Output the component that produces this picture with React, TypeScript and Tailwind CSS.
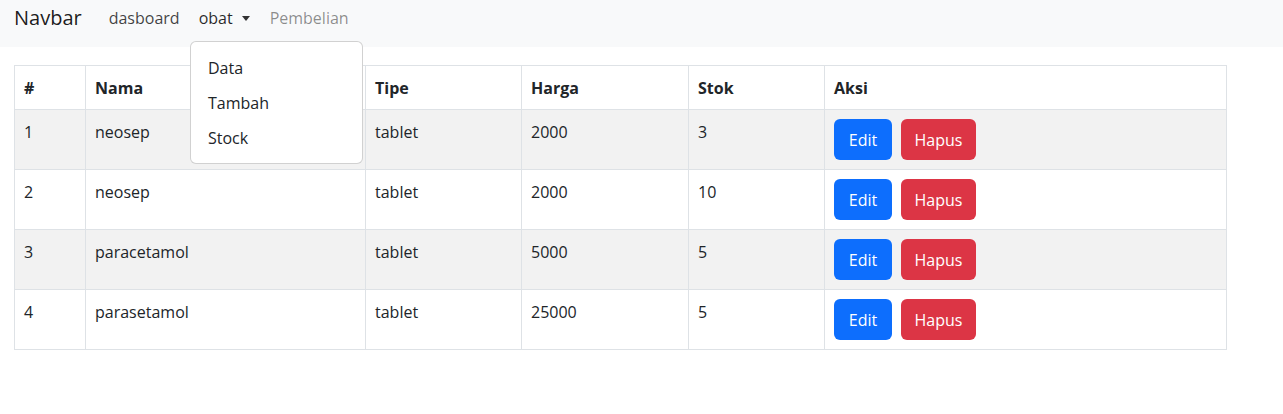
import React from "react";

const rows = [
  { no: 1, nama: "neosep", tipe: "tablet", harga: "2000", stok: "3" },
  { no: 2, nama: "neosep", tipe: "tablet", harga: "2000", stok: "10" },
  { no: 3, nama: "paracetamol", tipe: "tablet", harga: "5000", stok: "5" },
  { no: 4, nama: "parasetamol", tipe: "tablet", harga: "25000", stok: "5" },
];

export default function App() {
  return (
    <div
      className="relative w-[1283px] h-[414px] bg-white text-[#212529]"
      style={{ fontFamily: '"Open Sans", "Noto Sans", sans-serif' }}
    >
      <nav className="h-[47px] bg-[#f8f9fa] pl-[14px]">
        <div className="h-[36px] flex items-center">
          <span className="text-[20px] text-[rgba(0,0,0,0.9)] mr-[27px] leading-none">Navbar</span>
          <span className="text-[16px] text-[rgba(0,0,0,0.75)] mr-[19px]">dasboard</span>
          <span className="text-[16px] text-[rgba(0,0,0,0.85)] flex items-center mr-[20px]">
            obat
            <span className="ml-[9px] w-0 h-0 border-l-[4px] border-r-[4px] border-t-[5px] border-l-transparent border-r-transparent border-t-[#333]" />
          </span>
          <span className="text-[16px] text-[rgba(0,0,0,0.45)]">Pembelian</span>
        </div>
      </nav>

      <div className="pl-[14px] pt-[18px]">
        <table className="table-fixed border-collapse w-[1212px] text-[16px]">
          <colgroup>
            <col className="w-[71px]" />
            <col className="w-[280px]" />
            <col className="w-[156px]" />
            <col className="w-[167px]" />
            <col className="w-[136px]" />
            <col className="w-[402px]" />
          </colgroup>
          <thead>
            <tr className="h-[44px]">
              {["#", "Nama", "Tipe", "Harga", "Stok", "Aksi"].map((h) => (
                <th key={h} className="border border-[#dee2e6] text-left font-bold px-[9px] align-middle">
                  {h}
                </th>
              ))}
            </tr>
          </thead>
          <tbody>
            {rows.map((r, i) => (
              <tr key={r.no} className={`h-[60px] ${i % 2 === 0 ? "bg-[#f2f2f2]" : "bg-white"}`}>
                <td className="border border-[#dee2e6] px-[9px] align-top pt-[10px]">{r.no}</td>
                <td className="border border-[#dee2e6] px-[9px] align-top pt-[10px]">{r.nama}</td>
                <td className="border border-[#dee2e6] px-[9px] align-top pt-[10px]">{r.tipe}</td>
                <td className="border border-[#dee2e6] px-[9px] align-top pt-[10px]">{r.harga}</td>
                <td className="border border-[#dee2e6] px-[9px] align-top pt-[10px]">{r.stok}</td>
                <td className="border border-[#dee2e6] px-[9px] align-top pt-[9px]">
                  <div className="flex gap-[9px]">
                    <button className="h-[41px] w-[58px] rounded-[6px] bg-[#0d6efd] text-white text-[16px]">Edit</button>
                    <button className="h-[41px] w-[75px] rounded-[6px] bg-[#dc3545] text-white text-[16px]">Hapus</button>
                  </div>
                </td>
              </tr>
            ))}
          </tbody>
        </table>
      </div>

      <div className="absolute left-[190px] top-[41px] w-[173px] h-[123px] bg-white border border-[rgba(0,0,0,0.18)] rounded-[6px] pt-[14px] text-[16px] text-[#212529]">
        <div className="h-[35px] pl-[17px] leading-[24px]">Data</div>
        <div className="h-[35px] pl-[17px] leading-[24px]">Tambah</div>
        <div className="h-[35px] pl-[17px] leading-[24px]">Stock</div>
      </div>
    </div>
  );
}
